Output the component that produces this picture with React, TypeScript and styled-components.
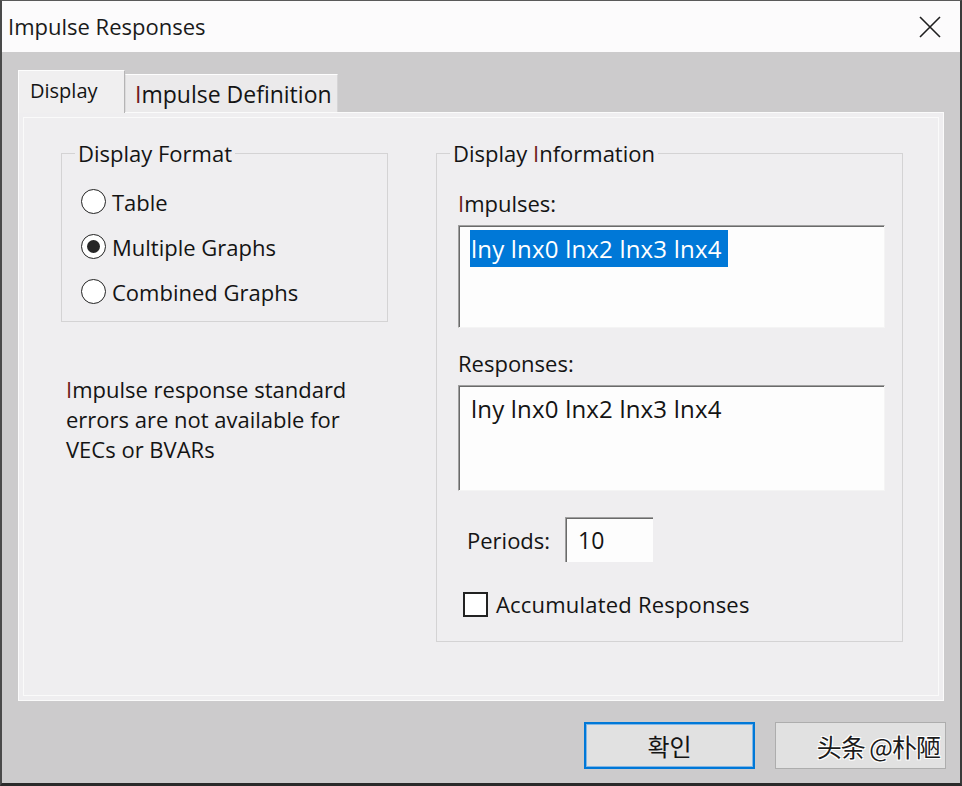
import React from "react";
import styled, {createGlobalStyle} from "styled-components";

const GlobalStyle = createGlobalStyle`
  html, body {
    margin: 0;
    padding: 0;
    background: #cccbcc;
  }
  body {
    font-family: "Open Sans", "Noto Sans", "Noto Sans CJK KR", sans-serif;
    color: #141414;
  }
`

const Window = styled.div`
  width: 962px;
  height: 786px;
  box-sizing: border-box;
  display: flex;
  flex-direction: column;
  background: #cccbcc;
  border-top: 1px solid #5a5a5a;
  border-left: 2px solid #4a4a4a;
  border-right: 2px solid #3a3a3a;
  border-bottom: 3px solid #2a2a2a;
`

const TitleBar = styled.div`
  height: 51px;
  flex: none;
  display: flex;
  align-items: center;
  justify-content: space-between;
  background: #fcfbfc;
  padding-left: 6px;
`

const Title = styled.span`
  font-size: 22px;
  color: #1a1a1a;
  margin-top: -2px;
`

const CloseButton = styled.div`
  width: 46px;
  height: 51px;
  margin-right: 7px;
  display: flex;
  align-items: center;
  justify-content: center;
`

const Body = styled.div`
  flex: 1;
  display: flex;
  flex-direction: column;
  padding: 18px 14px 0 16px;
`

const TabStrip = styled.div`
  height: 42px;
  display: flex;
  align-items: flex-end;
`

const Tab = styled.div<{ $active?: boolean }>`
  box-sizing: border-box;
  display: flex;
  align-items: center;
  position: relative;
  z-index: ${p => (p.$active ? 2 : 1)};
  height: ${p => (p.$active ? 43 : 38)}px;
  margin-bottom: ${p => (p.$active ? -1 : 0)}px;
  padding: ${p => (p.$active ? "0 0 4px 11px" : "0 0 0 9px")};
  width: ${p => (p.$active ? 107 : 213)}px;
  font-size: ${p => (p.$active ? 20 : 23)}px;
  background: ${p => (p.$active ? "#f0eff0" : "#ebeaeb")};
  border-top: 1px solid #fdfdfd;
  border-left: 1px solid ${p => (p.$active ? "#fdfdfd" : "#dcdbdc")};
  border-right: 1px solid ${p => (p.$active ? "#b5b4b5" : "#d6d5d6")};
`

const Mn = styled.span`
  color: #6e1b1b;
`

const Panel = styled.div`
  box-sizing: border-box;
  width: 926px;
  height: 589px;
  background: #efeef0;
  border: 1px solid #fbfbfb;
  box-shadow: inset 0 0 0 4px #efeef0, inset 0 0 0 5px #fafafa;
  display: grid;
  grid-template-columns: 327px 467px;
  column-gap: 48px;
  align-items: start;
  padding: 25px 0 0 42px;
`

const Column = styled.div`
  display: flex;
  flex-direction: column;
`

const Group = styled.fieldset<{ $padTop: number; $padBottom: number }>`
  margin: 0;
  min-width: 0;
  border: 1px solid #d4d3d4;
  padding: ${p => p.$padTop}px 17px ${p => p.$padBottom}px 17px;
`

const Legend = styled.legend`
  font-size: 22px;
  line-height: 30px;
  padding: 0 3px;
  margin-left: -4px;
`

const Content = styled.div`
  display: flex;
  flex-direction: column;
  align-items: flex-start;
  padding-left: 4px;
`

const RadioRow = styled.label`
  display: flex;
  align-items: center;
  height: 45px;
  font-size: 22px;
  gap: 6px;
  margin-left: 2px;
`

const RadioCircle = styled.span<{ $checked?: boolean }>`
  box-sizing: border-box;
  width: 25px;
  height: 25px;
  border-radius: 50%;
  border: 1.6px solid #222;
  background: #fff;
  display: flex;
  align-items: center;
  justify-content: center;
  &::after {
    content: "";
    display: ${p => (p.$checked ? "block" : "none")};
    width: 13px;
    height: 13px;
    border-radius: 50%;
    background: #262626;
  }
`

const Note = styled.p`
  margin: 52px 0 0 5px;
  font-size: 22px;
  line-height: 30px;
`

const FieldLabel = styled.div<{ $gap?: number }>`
  font-size: 22px;
  line-height: 30px;
  margin-top: ${p => p.$gap ?? 0}px;
`

const ListBox = styled.div<{ $h: number }>`
  box-sizing: border-box;
  width: 427px;
  height: ${p => p.$h}px;
  margin-top: 7px;
  background: #fdfdfd;
  border-top: 1px solid #a0a0a0;
  border-left: 1px solid #a0a0a0;
  border-right: 1px solid #f4f4f4;
  border-bottom: 1px solid #f4f4f4;
  box-shadow: inset 1px 1px 0 #6a6a6a;
  padding: 4px 0 0 11px;
`

const Item = styled.span<{ $selected?: boolean }>`
  display: inline-block;
  font-size: 24px;
  line-height: 37px;
  letter-spacing: 0.2px;
  padding: 0 6px 0 1px;
  color: ${p => (p.$selected ? "#fff" : "#141414")};
  background: ${p => (p.$selected ? "#0078d7" : "transparent")};
`

const PeriodsRow = styled.div`
  display: flex;
  align-items: center;
  gap: 15px;
  margin-top: 26px;
  padding-left: 9px;
  font-size: 22px;
`

const TextInput = styled.div`
  box-sizing: border-box;
  width: 88px;
  height: 45px;
  background: #fdfdfd;
  border-top: 1px solid #a0a0a0;
  border-left: 1px solid #a0a0a0;
  box-shadow: inset 1px 1px 0 #6a6a6a;
  display: flex;
  align-items: center;
  padding-left: 12px;
  font-size: 23px;
`

const CheckRow = styled.label`
  display: flex;
  align-items: center;
  gap: 8px;
  height: 30px;
  margin-top: 27px;
  padding-left: 5px;
  font-size: 22px;
  letter-spacing: 0.2px;
`

const CheckBox = styled.span`
  box-sizing: border-box;
  width: 25px;
  height: 25px;
  border: 2px solid #222;
  background: #fff;
`

const Footer = styled.div`
  display: flex;
  justify-content: flex-end;
  gap: 20px;
  margin-top: 21px;
`

const Button = styled.div<{ $default?: boolean }>`
  box-sizing: border-box;
  width: 171px;
  height: 47px;
  display: flex;
  align-items: center;
  justify-content: ${p => (p.$default ? "center" : "flex-end")};
  background: #e1e1e1;
  border: ${p => (p.$default ? "2px solid #0078d7" : "1px solid #adadad")};
  box-shadow: ${p => (p.$default ? "inset 0 0 0 1px #7fb6e6" : "none")};
  font-family: "Noto Sans CJK KR", "Noto Sans", sans-serif;
  font-size: 24px;
  padding-right: ${p => (p.$default ? 0 : 5)}px;
`

const Watermark = styled.span`
  font-family: "Noto Sans CJK SC", sans-serif;
  font-size: 25px;
  color: #1c1c1c;
  letter-spacing: -1px;
  text-shadow: 1px 1px 0 #fff, -1px -1px 0 #fff, 1px -1px 0 #fff, -1px 1px 0 #fff;
`

const Radio = ({label, checked}: { label: string, checked?: boolean }) => (
    <RadioRow>
        <RadioCircle $checked={checked}/>
        {label}
    </RadioRow>
)

const App = () => {
    return (
        <Window>
            <GlobalStyle/>
            <TitleBar>
                <Title>Impulse Responses</Title>
                <CloseButton>
                    <svg width="22" height="22" viewBox="0 0 22 22">
                        <path d="M1 1 L21 21 M21 1 L1 21" stroke="#1e1e1e" strokeWidth="1.6" fill="none"/>
                    </svg>
                </CloseButton>
            </TitleBar>
            <Body>
                <TabStrip>
                    <Tab $active>Display</Tab>
                    <Tab><Mn>I</Mn>mpulse Definition</Tab>
                </TabStrip>
                <Panel>
                    <Column>
                        <Group $padTop={11} $padBottom={7}>
                            <Legend>Display Format</Legend>
                            <Radio label="Table"/>
                            <Radio label="Multiple Graphs" checked/>
                            <Radio label="Combined Graphs"/>
                        </Group>
                        <Note>
                            <Mn>I</Mn>mpulse response standard<br/>
                            errors are not available for<br/>
                            VECs or BVARs
                        </Note>
                    </Column>
                    <Group $padTop={20} $padBottom={22}>
                        <Legend>Display <Mn>I</Mn>nformation</Legend>
                        <Content>
                            <FieldLabel><Mn>I</Mn>mpulses:</FieldLabel>
                            <ListBox $h={103}>
                                <Item $selected>lny lnx0 lnx2 lnx3 lnx4</Item>
                            </ListBox>
                            <FieldLabel $gap={20}>Responses:</FieldLabel>
                            <ListBox $h={106}>
                                <Item>lny lnx0 lnx2 lnx3 lnx4</Item>
                            </ListBox>
                            <PeriodsRow>
                                Periods:
                                <TextInput>10</TextInput>
                            </PeriodsRow>
                            <CheckRow>
                                <CheckBox/>
                                Accumulated Responses
                            </CheckRow>
                        </Content>
                    </Group>
                </Panel>
                <Footer>
                    <Button $default>확인</Button>
                    <Button><Watermark>头条 @朴陋</Watermark></Button>
                </Footer>
            </Body>
        </Window>
    )
}

export default App
